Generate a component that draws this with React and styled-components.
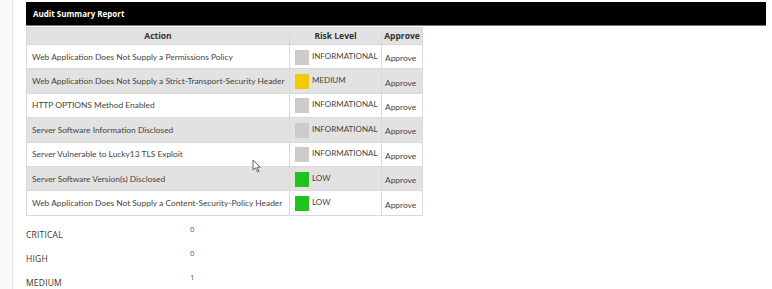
import React from 'react';
import styled, { createGlobalStyle } from 'styled-components';

const GlobalStyle = createGlobalStyle`
  html, body { margin: 0; padding: 0; background: #fff; }
  body { font-family: 'Open Sans', 'Noto Sans', Arial, sans-serif; color: #333; }
`;

const Page = styled.div`
  position: relative;
  display: flex;
  width: 772px;
  height: 289px;
  overflow: hidden;
  background: #fff;
`;

const Gutter = styled.div`
  width: 12px;
  flex: none;
  background: #fafafa;
  border-right: 1px solid #e6e6e6;
`;

const Content = styled.div`
  flex: 1;
  padding: 2px 6px 0 13px;
`;

const TitleBar = styled.div`
  height: 23px;
  background: #000;
  border-bottom: 1px solid #777;
  color: #fff;
  font-family: 'Open Sans', sans-serif;
  font-size: 8px;
  font-weight: 700;
  display: flex;
  align-items: center;
  padding-left: 7px;
`;

const Table = styled.table`
  border-collapse: collapse;
  table-layout: fixed;
  font-family: Lato, 'Open Sans', sans-serif;
  font-size: 8.4px;
  line-height: 12px;
  width: 396px;
  margin-top: 1px;
`;

const Th = styled.th`
  background: #e2e2e2;
  color: #333;
  font-family: 'Open Sans', sans-serif;
  font-weight: 700;
  height: 16px;
  padding: 0;
  border: 1px solid #d8d8d8;
  text-align: center;
  font-size: 8.5px;
`;

const Tr = styled.tr`
  background: ${p => (p.$alt ? '#e2e2e2' : '#fff')};
`;

const Td = styled.td`
  border: 1px solid #dadada;
  height: 23.4px;
  padding: 0 ${p => (p.$tight ? 3 : 5)}px;
  color: #444;
  white-space: nowrap;
  overflow: hidden;
  vertical-align: middle;
`;

const RiskCell = styled.div`
  display: flex;
  align-items: flex-start;
  gap: 3px;
  padding-top: 1px;
`;

const Swatch = styled.span`
  width: 14px;
  height: 15px;
  flex: none;
  background: ${p => p.$color};
`;

const RiskText = styled.span`
  font-size: 8px;
  line-height: 10px;
  padding-top: 1px;
`;

const ApproveText = styled.span`
  display: block;
  font-size: 8.4px;
  padding-top: 3px;
`;

const Summary = styled.div`
  display: grid;
  grid-template-columns: 164px auto;
  margin-top: 4px;
  font-size: 8.5px;
  color: #333;
`;

const SumLabel = styled.div`
  height: 24px;
  padding-top: 9px;
  box-sizing: border-box;
  letter-spacing: 0.2px;
`;

const SumValue = styled.div`
  height: 24px;
  padding-top: 3px;
  box-sizing: border-box;
  font-size: 8px;
  color: #555;
`;

const Cursor = styled.svg`
  position: absolute;
  left: 252px;
  top: 159px;
`;

const colors = {
  INFORMATIONAL: '#cccccc',
  MEDIUM: '#f5c800',
  LOW: '#1ec31e',
};

const rows = [
  ['Web Application Does Not Supply a Permissions Policy', 'INFORMATIONAL'],
  ['Web Application Does Not Supply a Strict-Transport-Security Header', 'MEDIUM'],
  ['HTTP OPTIONS Method Enabled', 'INFORMATIONAL'],
  ['Server Software Information Disclosed', 'INFORMATIONAL'],
  ['Server Vulnerable to Lucky13 TLS Exploit', 'INFORMATIONAL'],
  ['Server Software Version(s) Disclosed', 'LOW'],
  ['Web Application Does Not Supply a Content-Security-Policy Header', 'LOW'],
];

const summary = [
  ['CRITICAL', 0],
  ['HIGH', 0],
  ['MEDIUM', 1],
];

export default function App() {
  return (
    <Page>
      <GlobalStyle />
      <Gutter />
      <Content>
        <TitleBar>Audit Summary Report</TitleBar>
        <Table>
          <colgroup>
            <col style={{ width: 263 }} />
            <col style={{ width: 92 }} />
            <col style={{ width: 41 }} />
          </colgroup>
          <thead>
            <tr>
              <Th>Action</Th>
              <Th>Risk Level</Th>
              <Th>Approve</Th>
            </tr>
          </thead>
          <tbody>
            {rows.map(([action, risk], i) => (
              <Tr key={i} $alt={i % 2 === 1}>
                <Td>{action}</Td>
                <Td>
                  <RiskCell>
                    <Swatch $color={colors[risk]} />
                    <RiskText>{risk}</RiskText>
                  </RiskCell>
                </Td>
                <Td $tight>
                  <ApproveText>Approve</ApproveText>
                </Td>
              </Tr>
            ))}
          </tbody>
        </Table>
        <Summary>
          {summary.map(([label, value]) => (
            <React.Fragment key={label}>
              <SumLabel>{label}</SumLabel>
              <SumValue>{value}</SumValue>
            </React.Fragment>
          ))}
        </Summary>
      </Content>
      <Cursor width="10" height="14" viewBox="0 0 10 14">
        <path d="M1 1 L1 11 L3.5 8.8 L5.5 13 L7 12.3 L5 8.2 L8.3 8.2 Z" fill="#fff" stroke="#555" strokeWidth="0.9" />
      </Cursor>
    </Page>
  );
}
